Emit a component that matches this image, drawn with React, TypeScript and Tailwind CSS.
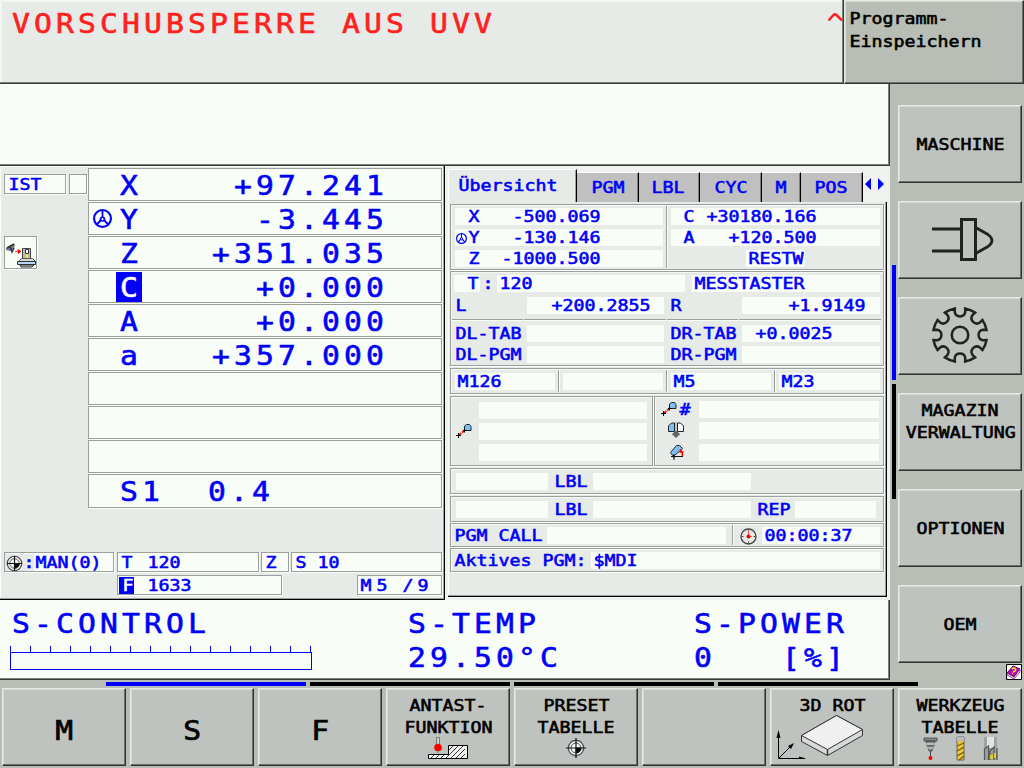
import React from "react";

type Box = { className?: string; children?: React.ReactNode };

/* Small status text on an 11px character grid */
function S({ className = "", children }: Box) {
  return (
    <span
      className={`relative top-px inline-block shrink-0 origin-left translate-x-[0.5px] scale-x-[1.218] whitespace-pre text-[15px] leading-[17px] [-webkit-text-stroke:0.55px_currentColor] ${className}`}
    >
      {children}
    </span>
  );
}

/* Large display text on a 22px character grid */
function L({ className = "", children }: Box) {
  return (
    <span
      className={`relative top-px inline-block shrink-0 origin-left scale-x-[1.1] whitespace-pre text-[27px] leading-[31px] tracking-[3.75px] [-webkit-text-stroke:0.6px_currentColor] ${className}`}
    >
      {children}
    </span>
  );
}

/* White value field */
function F({ className = "", children }: Box) {
  return <div className={`flex h-[17px] shrink-0 bg-[#f8fdf8] ${className}`}>{children}</div>;
}

/* Fixed-width caption */
function C({ className = "", children }: Box) {
  return (
    <div className={`flex h-[17px] shrink-0 ${className}`}>
      <S>{children}</S>
    </div>
  );
}

function Section({ className = "", children }: Box) {
  return (
    <section
      className={`shrink-0 border border-[#9ca09c] shadow-[1px_1px_0_#fbfefb,inset_1px_1px_0_#f4f8f4] ${className}`}
    >
      {children}
    </section>
  );
}

function Divider({ className = "" }: Box) {
  return <div className={`w-[2px] shrink-0 border-l border-[#9ca09c] bg-[#f8fdf8] ${className}`} />;
}

function Frame({ className = "", children }: Box) {
  return (
    <div
      className={`flex h-5 shrink-0 border border-[#9ca09c] bg-[#f8fdf8] pt-px shadow-[1px_1px_0_#fbfefb] ${className}`}
    >
      {children}
    </div>
  );
}

function Key({ className = "", lines, children }: Box & { lines?: string[] }) {
  return (
    <button
      className={`flex h-[78px] w-[124px] shrink-0 flex-col items-center border border-b-[#303430] border-l-[#e4eae2] border-r-[#303430] border-t-[#e4eae2] bg-[#bfc3bf] text-black shadow-[inset_-1px_-1px_0_#6c706c,inset_1px_1px_0_#d6dcd4] ${className}`}
    >
      {lines?.map((t) => (
        <S key={t} className="!origin-center !leading-[22px]">
          {t}
        </S>
      ))}
      {children}
    </button>
  );
}

function Wheel({ className = "" }: Box) {
  return (
    <svg className={className} viewBox="0 0 18 18" fill="none" stroke="#0000f8">
      <circle cx="9" cy="9" r="8" strokeWidth="2" />
      <circle cx="9" cy="9.5" r="1.8" strokeWidth="1.4" />
      <path d="M9 1v7M7.5 11l-4.2 3.5M10.5 11l4.2 3.5" strokeWidth="1.7" />
      <path d="M8 7.5 5 14M10 7.5l3 6.5" strokeWidth="1.2" />
    </svg>
  );
}

function Target({ className = "", long = false }: Box & { long?: boolean }) {
  return (
    <svg className={className} viewBox="0 0 20 20" fill="none" stroke="#111">
      <circle cx="10" cy="10" r="7.6" fill="#f4f6f4" stroke="#444" strokeWidth="1.2" />
      <circle cx="10" cy="10" r="5" stroke="#555" />
      <path d="M10 10h5a5 5 0 0 1-5 5z" fill="#000" />
      <path d={long ? "M10 0v20M0 10h20" : "M10 2v16M2 10h16"} strokeWidth="1.2" />
    </svg>
  );
}

function Shift({ className = "" }: Box) {
  return (
    <svg className={className} viewBox="0 0 16 16" fill="none">
      <path d="M8.500 7.500V3l2-1.500h3l1.500 2v4z" fill="#80c0f0" stroke="#202830" />
      <path d="M3 12 9 7" stroke="#f00" strokeWidth="1.8" strokeDasharray="3 1" />
      <path d="M2.500 10v5M0 12.500h5M8.500 5.500v4M7 7.500h4" stroke="#000" />
    </svg>
  );
}

const axes: [string, string][] = [
  ["X", "+97.241"],
  ["Y", "-3.445"],
  ["Z", "+351.035"],
  ["C", "+0.000"],
  ["A", "+0.000"],
  ["a", "+357.000"],
  ["", ""],
  ["", ""],
  ["", ""],
];

function Positions() {
  return (
    <main className="flex h-[434px] w-[445px] shrink-0 flex-col border-b border-r border-black bg-[#e7ebe7] shadow-[inset_-1px_-1px_0_#9ca09c,inset_1px_1px_0_#fbfefb]">
      <div className="flex h-[342px] pt-[2px]">
        <div className="flex w-[88px] shrink-0 flex-col pl-1 pt-[6px]">
          <div className="flex gap-[3px]">
            <Frame className="w-[62px] pl-[3px]">
              <S>IST</S>
            </Frame>
            <Frame className="w-[18px]" />
          </div>
          <div className="mt-[42px] h-[33px] w-[33px] border border-[#9ca09c] bg-[#f8fdf8] shadow-[1px_1px_0_#fbfefb]">
            <svg className="h-[31px] w-[31px]" viewBox="0 0 31 31" fill="none">
              <path d="m1 11 5-3 4-1-1 5-4 2-4-1z" fill="#777d80" />
              <path d="m2 11 7-4M5 10l2 5 2-4" stroke="#333" strokeWidth="1.5" />
              <path d="M5 11h2v2H5z" fill="#3030a0" />
              <path d="M10 14.500h5M13 12.500v4l3-2z" stroke="#f00" fill="#f00" strokeWidth=".7" />
              <path d="M17.500 11.500h8v11h-8z" fill="#b8bcb8" stroke="#444" />
              <path d="M20.500 12.500h3v4h-3z" fill="#fff" stroke="#333" />
              <path d="M21 17h2v4h-2z" fill="#f0e840" />
              <path d="m16.500 21.500-3 3h17l-3-3z" fill="#d4d8d4" stroke="#555" />
              <path d="M12.500 24.500h18v3h-18z" fill="#b8d8f8" stroke="#333" />
              <path d="M15 28h14l-2 2H16z" fill="#ccc" stroke="#333" />
            </svg>
          </div>
        </div>
        <div className="flex w-[354px] shrink-0 flex-col gap-px">
          {axes.map(([a, v], i) => (
            <div
              key={i}
              className="flex h-[33px] shrink-0 border border-[#9ca09c] bg-[#f8fdf8] shadow-[1px_1px_0_#fbfefb]"
            >
              <div className="flex w-[27px] shrink-0 pl-[4px] pt-[6px]">
                {a === "Y" && <Wheel className="h-[19px] w-[19px]" />}
              </div>
              <div
                className={
                  a === "C"
                    ? "my-px flex h-[30px] w-[26px] shrink-0 bg-[#0000f8] pl-[4px] text-white"
                    : "flex w-[26px] shrink-0 pl-[4px]"
                }
              >
                <L className={a === "C" ? "!top-0 h-[30px]" : ""}>{a}</L>
              </div>
              <div className="flex w-[246px] shrink-0 justify-end">
                <L className="!origin-right">{v}</L>
              </div>
            </div>
          ))}
          <div className="flex h-[34px] shrink-0 border border-[#9ca09c] bg-[#f8fdf8] pl-[31px] shadow-[1px_1px_0_#fbfefb]">
            <L>S1  0.4</L>
          </div>
        </div>
      </div>
      <div className="mt-[44px] flex pl-1">
        <Frame className="w-[110px]">
          <div className="flex h-[17px] w-[29px] shrink-0 bg-[#e7ebe7]">
            <Target className="h-[19px] w-[19px] shrink-0" />
            <S className="-left-px">:</S>
          </div>
          <S className="left-px">MAN(0)</S>
        </Frame>
        <Frame className="ml-[3px] w-[142px] pl-[3px]">
          <C className="w-[26px]">T</C>
          <S>120</S>
        </Frame>
        <Frame className="ml-[2px] w-[28px] pl-[3px]">
          <S>Z</S>
        </Frame>
        <Frame className="ml-[2px] w-[151px] pl-[3px]">
          <S>S 10</S>
        </Frame>
      </div>
      <div className="mt-[3px] flex pl-[117px]">
        <Frame className="w-[165px] pl-px">
          <div className="flex h-[17px] w-[15px] shrink-0 bg-[#0000f8] pl-[3px] text-white">
            <S>F</S>
          </div>
          <S className="ml-[13px]">1633</S>
        </Frame>
        <Frame className="ml-[75px] w-[85px] pl-[2px]">
          <C className="w-[16px]">M</C>
          <C className="w-[26px]">5</C>
          <C className="w-[15px]">/</C>
          <S>9</S>
        </Frame>
      </div>
    </main>
  );
}

const tabs: [string, string][] = [
  ["PGM", "w-[62px] pl-[14px]"],
  ["LBL", "w-[61px] pl-[12px]"],
  ["CYC", "w-[62px] pl-[14px]"],
  ["M", "w-[39px] pl-[13px]"],
  ["POS", "w-[62px] pl-[13px]"],
];

function Overview() {
  return (
    <aside className="flex h-[434px] w-[445px] shrink-0 flex-col bg-[#eff2ee] pl-[3px]">
      <nav className="flex h-[36px] shrink-0 items-end pt-[3px]">
        <div className="flex h-[33px] w-[129px] shrink-0 border-l border-t border-r border-l-white border-r-black border-t-white bg-[#e7ebe7] pl-[9px] pt-[7px] shadow-[inset_-1px_0_0_#9ca09c]">
          <S>Übersicht</S>
        </div>
        {tabs.map(([t, w]) => (
          <div
            key={t}
            className={`flex h-[30px] shrink-0 self-end border-r border-t border-r-black border-t-white bg-[#c0c0c0] pt-[6px] shadow-[inset_-1px_0_0_#808080] ${w}`}
          >
            <S>{t}</S>
          </div>
        ))}
        <svg className="mb-[12px] ml-[2px] h-[12px] w-[20px] shrink-0" viewBox="0 0 20 12" fill="#0000f8">
          <path d="M6 0v12L0 6zM13 0v12l6-6z" />
        </svg>
      </nav>
      <div className="flex h-[395px] w-[439px] shrink-0 flex-col border-b border-r border-black bg-[#e7ebe7] pl-[2px] pt-[2px] shadow-[inset_-1px_-1px_0_#9ca09c,inset_1px_0_0_#fbfefb]">
        <Section className="flex h-[66px] w-[434px]">
          <div className="flex w-[215px] shrink-0 flex-col gap-1 pl-1 pt-[3px]">
            <F className="w-[208px]">
              <C className="ml-[13px] w-[44px]">X</C>
              <S>-500.069</S>
            </F>
            <F className="w-[208px]">
              <div className="w-[13px] shrink-0 pl-px pt-[4px]">
                <Wheel className="h-[11px] w-[11px]" />
              </div>
              <C className="w-[44px]">Y</C>
              <S>-130.146</S>
            </F>
            <F className="w-[208px]">
              <C className="ml-[13px] w-[33px]">Z</C>
              <S>-1000.500</S>
            </F>
          </div>
          <Divider className="mt-px h-[62px]" />
          <div className="flex flex-col gap-1 pl-[3px] pt-[3px]">
            <F className="w-[209px]">
              <C className="ml-[12px] w-[23px]">C</C>
              <S>+30180.166</S>
            </F>
            <F className="w-[209px]">
              <C className="ml-[12px] w-[45px]">A</C>
              <S>+120.500</S>
            </F>
            <F className="ml-[75px] w-[59px] pl-[2px]">
              <S>RESTW</S>
            </F>
          </div>
        </Section>

        <Section className="mt-px flex h-[95px] w-[434px] flex-col pt-[3px]">
          <div className="flex pl-[3px]">
            <F className="w-[26px] pl-[13px]">
              <S>T</S>
            </F>
            <C className="ml-[2px] w-[15px]">:</C>
            <F className="w-[188px] pl-[2px]">
              <S>120</S>
            </F>
            <F className="ml-[7px] w-[188px] pl-[2px]">
              <S>MESSTASTER</S>
            </F>
          </div>
          <div className="mt-[5px] flex pl-[4px]">
            <C className="w-[72px]">L</C>
            <F className="w-[137px] pl-[24px]">
              <S>+200.2855</S>
            </F>
            <C className="ml-[6px] w-[72px]">R</C>
            <F className="w-[138px] pl-[46px]">
              <S>+1.9149</S>
            </F>
          </div>
          <div className="mt-[5px] flex gap-px pl-px">
            {[0, 1, 2, 3].map((n) => (
              <div
                key={n}
                className={`h-[2px] shrink-0 border-t border-[#9ca09c] bg-[#f8fdf8] ${n % 2 ? "w-[142px]" : "w-[71px]"}`}
              />
            ))}
          </div>
          <div className="mt-[4px] flex pl-[4px]">
            <C className="w-[72px]">DL-TAB</C>
            <F className="w-[137px]" />
            <C className="ml-[6px] w-[72px]">DR-TAB</C>
            <F className="w-[138px] pl-[13px]">
              <S>+0.0025</S>
            </F>
          </div>
          <div className="mt-1 flex pl-[4px]">
            <C className="w-[72px]">DL-PGM</C>
            <F className="w-[137px]" />
            <C className="ml-[6px] w-[72px]">DR-PGM</C>
            <F className="w-[138px]" />
          </div>
        </Section>

        <Section className="mt-[2px] flex h-[26px] w-[434px] pl-[4px] pt-px">
          <F className="mt-[3px] w-[100px] pl-[2px]">
            <S>M126</S>
          </F>
          <Divider className="ml-[3px] h-[22px]" />
          <F className="ml-[3px] mt-[3px] w-[100px]" />
          <Divider className="ml-[3px] h-[22px]" />
          <F className="ml-[3px] mt-[3px] w-[100px] pl-[2px]">
            <S>M5</S>
          </F>
          <Divider className="ml-[3px] h-[22px]" />
          <F className="ml-[3px] mt-[3px] w-[101px] pl-[2px]">
            <S>M23</S>
          </F>
        </Section>

        <div className="mt-[2px] flex shrink-0 gap-px">
          <Section className="flex h-[70px] w-[203px]">
            <Shift className="ml-[5px] mt-[26px] h-4 w-4 shrink-0" />
            <div className="ml-[7px] flex flex-col gap-1 pt-[5px]">
              <F className="w-[168px]" />
              <F className="w-[168px]" />
              <F className="w-[168px]" />
            </div>
          </Section>
          <Section className="flex h-[70px] w-[230px]">
            <div className="flex w-[44px] shrink-0 flex-col pl-[6px] pt-[4px]">
              <div className="flex">
                <Shift className="h-4 w-4 shrink-0" />
                <S className="left-[2px]">#</S>
              </div>
              <svg className="ml-[6px] mt-[4px] h-4 w-[18px]" viewBox="0 0 18 16" fill="none" stroke="#202428">
                <path d="M1.500 9.500V4l3-3h3v8.500z" fill="#80c0f0" />
                <path d="M10.500 9.500V1h3l3 3v5.500z" fill="#f8fdf8" />
                <path d="M9 0v12" stroke="#999" />
                <path d="M5.500 12 9 9.500l3.500 2.500L9 15.500z" fill="#666" stroke="#555" />
              </svg>
              <svg className="ml-[8px] mt-[6px] h-4 w-4" viewBox="0 0 16 16" fill="none">
                <path d="m1.500 8.500 6-7h3l3 3-8 7h-2z" fill="#80c0f0" stroke="#202428" />
                <path d="M5 10v6M2 12.500h12" stroke="#111" />
                <path d="m3 12 2 2 2-2z" fill="#111" />
                <path d="M11 6c2 1 2.500 3 2.500 6M10.500 8h4" stroke="#f00" strokeWidth="1.600" />
              </svg>
            </div>
            <div className="flex flex-col gap-1 pt-[4px]">
              <F className="w-[180px]" />
              <F className="w-[180px]" />
              <F className="mt-px w-[180px]" />
            </div>
          </Section>
        </div>

        <Section className="mt-[2px] flex h-[26px] w-[434px] pl-[5px] pt-[4px]">
          <F className="w-[92px]" />
          <C className="ml-[6px] w-[39px]">LBL</C>
          <F className="w-[158px]" />
        </Section>
        <Section className="mt-[2px] flex h-[26px] w-[434px] pl-[5px] pt-[4px]">
          <F className="w-[92px]" />
          <C className="ml-[6px] w-[39px]">LBL</C>
          <F className="w-[158px]" />
          <C className="ml-[6px] w-[38px]">REP</C>
          <F className="w-[81px]" />
        </Section>
        <Section className="mt-px flex h-[24px] w-[434px] pl-[3px] pt-px">
          <C className="mt-[2px] w-[93px]">PGM CALL</C>
          <F className="mt-[2px] w-[179px]" />
          <Divider className="ml-[6px] h-[20px]" />
          <svg className="ml-[6px] mt-[3px] h-[17px] w-[17px] shrink-0" viewBox="0 0 17 17" fill="none">
            <circle cx="8.500" cy="8.500" r="7.500" fill="#e8e8e4" stroke="#444" strokeWidth="1.300" />
            <path d="M8.500 2v1.500M8.500 13.500V15M2 8.500h1.500M13.500 8.500H15" stroke="#444" />
            <path d="M8.500 2.500v6h3.500" stroke="#f66" strokeWidth="1.200" />
            <circle cx="8.500" cy="8.500" r="2" fill="#f00" />
          </svg>
          <F className="ml-[5px] mt-[2px] w-[118px] pl-[2px]">
            <S>00:00:37</S>
          </F>
        </Section>
        <Section className="mt-px flex h-[24px] w-[434px] pl-[3px] pt-[3px]">
          <C className="w-[137px]">Aktives PGM:</C>
          <F className="w-[289px] pl-[2px]">
            <S>$MDI</S>
          </F>
        </Section>
      </div>
    </aside>
  );
}

function Status() {
  return (
    <footer className="flex h-[80px] w-[890px] shrink-0 border-b border-r border-[#383c38] bg-[#f8fdf8] pl-[10px] pt-[7px] shadow-[inset_-1px_-1px_0_#7c807c]">
      <div className="flex w-[398px] shrink-0 flex-col">
        <L className="left-[2px] self-start">S-CONTROL</L>
        <svg className="mt-[8px] h-[24px] w-[302px]" viewBox="0 0 302 24" fill="none" stroke="#0000f8" shapeRendering="crispEdges">
          <path d="M.5 6.500h301v17H.5z" />
          {Array.from({ length: 16 }, (_, i) => (
            <path key={i} d={`M${i * 20 + 0.5} 0v6`} />
          ))}
        </svg>
      </div>
      <div className="flex w-[286px] shrink-0 flex-col items-start gap-[3px]">
        <L>S-TEMP</L>
        <L>29.50°C</L>
      </div>
      <div className="flex flex-col items-start gap-[3px]">
        <L>S-POWER</L>
        <L>0   [%]</L>
      </div>
    </footer>
  );
}

function Gear() {
  const teeth = Array.from({ length: 8 }, (_, i) => {
    const p = (r: number, deg: number) => {
      const t = ((deg + i * 45) * Math.PI) / 180;
      return `${(29 + r * Math.cos(t)).toFixed(2)} ${(29 + r * Math.sin(t)).toFixed(2)}`;
    };
    return `${i ? "L" : "M"}${p(27, -34)}A27 27 0 0 1 ${p(27, -11)}L${p(23.5, -13)}A5.4 5.4 0 0 0 ${p(23.5, 13)}L${p(27, 11)}`;
  }).join("");
  return (
    <svg className="mt-[8px] h-[58px] w-[58px]" viewBox="0 0 58 58" fill="none" stroke="#202420" strokeWidth="2.5">
      <path d={`${teeth}Z`} strokeLinejoin="miter" />
      <circle cx="29" cy="29" r="8.3" />
    </svg>
  );
}

function SideKeys() {
  return (
    <div className="flex h-[596px] w-[134px] shrink-0 pl-[2px]">
      <div className="w-1 shrink-0 pt-[181px]">
        <div className="h-[115px] bg-[#0000f8]" />
        <div className="mt-1 h-[115px] bg-black" />
      </div>
      <div className="ml-[2px] flex w-[126px] shrink-0 flex-col gap-[18px] pt-[21px]">
        <Key className="justify-center" lines={["MASCHINE"]} />
        <Key>
          <svg className="ml-[6px] mt-[14px] h-[48px] w-[64px]" viewBox="0 0 64 48" fill="none" stroke="#202420" strokeWidth="3">
            <path d="M1 13h28M1 35h28" />
            <path d="M30.500 3.500h14v40h-14z" />
            <path d="M45.500 12 57 18.500q8 6 0 12L45.500 37" strokeWidth="2.800" />
          </svg>
        </Key>
        <Key>
          <Gear />
        </Key>
        <Key className="pt-[5px]" lines={["MAGAZIN", "VERWALTUNG"]} />
        <Key className="justify-center" lines={["OPTIONEN"]} />
        <div className="flex flex-col">
          <Key className="justify-center" lines={["OEM"]} />
          <svg className="ml-[108px] mt-px h-4 w-4" viewBox="0 0 16 16">
            <path d="M.5.5h15v15H.5z" fill="#fff" stroke="#000" />
            <path d="m1 9 6-7 7 3-6 8z" fill="#c000c0" stroke="#600060" />
            <path d="m1 9 7 4 6-8v3l-6 7-7-4z" fill="#ddd" stroke="#800080" strokeWidth=".7" />
            <path d="M6 5c2-2 5 0 3 2l-2 1M6 9.500h1" fill="none" stroke="#ff0" strokeWidth="1.500" />
          </svg>
        </div>
      </div>
    </div>
  );
}

function SoftKeys() {
  return (
    <div className="flex h-[88px] shrink-0 flex-col pt-[2px]">
      <div className="flex h-1 shrink-0 gap-1 pl-[106px]">
        <div className="w-[200px] bg-[#0000f8]" />
        <div className="w-[200px] bg-black" />
        <div className="w-[200px] bg-black" />
        <div className="w-[200px] bg-black" />
      </div>
      <div className="mt-[2px] flex gap-1 pl-[2px]">
        {["M", "S", "F"].map((t) => (
          <Key key={t} className="justify-center pt-[4px]">
            <L className="!origin-center !tracking-normal [-webkit-text-stroke:0.7px_currentColor]">{t}</L>
          </Key>
        ))}
        <Key className="pt-[5px]" lines={["ANTAST-", "FUNKTION"]}>
          <svg className="-mt-[2px] h-[23px] w-[42px]" viewBox="0 0 42 23" fill="none">
            <path d="M9.500 1.500h3v7h-3z" fill="#d0d4d0" stroke="#777" />
            <circle cx="11" cy="11.500" r="3.800" fill="#f00" />
            <path d="M11 15v2" stroke="#777" />
            <path d="M1.500 18.500h20v-9h19v13h-39z" fill="#f0f2f0" stroke="#000" />
            <path d="m4 22 3-3m2 3 3-3m2 3 3-3m2 3 12-12m-7 12 12-12m-7 12 9-9m-4 9 4-4M22 14l4-4" stroke="#222" strokeWidth=".9" />
          </svg>
        </Key>
        <Key className="pt-[5px]" lines={["PRESET", "TABELLE"]}>
          <Target long className="h-[20px] w-[20px]" />
        </Key>
        <Key />
        <Key className="pt-[5px]" lines={["3D ROT"]}>
          <svg className="-mt-[5px] h-[48px] w-[116px]" viewBox="0 0 116 48" fill="none">
            <path d="m27.500 24.500 35-20 26 14v6l-35 20-26-14z" fill="#d8dad8" stroke="#333" />
            <path d="m27.500 24.500 35-20 26 14-35 20z" fill="#f0f0f0" stroke="#333" />
            <path d="M53.500 38.500v6" stroke="#333" strokeWidth="1.500" />
            <path d="M4.500 24v23.500H27M5 47l13-13" stroke="#000" />
            <path d="m4.500 19 2 8h-4zM32 47.500l-7-2v4zM20 32l-3 6-3-3z" fill="#000" />
          </svg>
        </Key>
        <Key className="pt-[5px]" lines={["WERKZEUG", "TABELLE"]}>
          <svg className="-mt-[2px] h-[25px] w-[80px]" viewBox="0 0 80 25" fill="none">
            <path d="M4 2h13v3H4zM6 5h9l-1 5H7zM8 11h5l-1 4H9z" fill="#888" stroke="#444" strokeWidth=".8" />
            <path d="M6 8h9M8 12h5" stroke="#eee" />
            <path d="M10.500 15v6" stroke="#444" />
            <circle cx="10.500" cy="22" r="2" fill="#f00" />
            <path d="M37 1h7v23h-7z" fill="#e8c840" stroke="#666" />
            <path d="M37 1h7v4h-7z" fill="#bbb" />
            <path d="m37 10 7-3M37 15l7-4M37 20l7-4M39 24l5-4" stroke="#765800" strokeWidth="1.300" />
            <path d="M64 1h13v23H64z" fill="#a0a4a0" />
            <path d="M67 1h7v11h-7z" fill="#e4e4e4" />
            <path d="M64.500 24V13l4-3v14M70 24v-9l4-4v13M77 12v12" stroke="#555" strokeWidth="1.300" />
            <path d="M70 19h3v4h-3zM74 17h2v5h-2z" fill="#e0cc30" />
          </svg>
        </Key>
      </div>
    </div>
  );
}

export default function App() {
  return (
    <div className="flex h-[768px] w-[1024px] flex-col overflow-hidden bg-[#b8beb5] font-['DejaVu_Sans_Mono',monospace] text-[#0000f8]">
      <header className="flex h-[84px] shrink-0">
        <div className="flex w-[844px] shrink-0 justify-between border-b border-r border-[#383c38] bg-[#e7ebe7] pl-[12px] pt-[7px] text-[#ff2020] shadow-[inset_-1px_-1px_0_#7c807c,inset_2px_2px_0_#f3f7f3]">
          <L>VORSCHUBSPERRE AUS UVV</L>
          <svg className="mt-[6px] h-[8px] w-[15px]" viewBox="0 0 15 8" fill="none" stroke="#ff2020" strokeWidth="2.500">
            <path d="M.5 7.500 6 1.500h2l6 6" />
          </svg>
        </div>
        <div className="flex w-[180px] shrink-0 flex-col items-start gap-[6px] border border-b-[#303430] border-l-[#e4eae2] border-r-[#303430] border-t-[#e4eae2] bg-[#b8beb5] pl-[4px] pt-[9px] text-black shadow-[inset_-1px_-1px_0_#6c706c,inset_1px_1px_0_#d6dcd4]">
          <S>Programm-</S>
          <S>Einspeichern</S>
        </div>
      </header>
      <div className="flex h-[596px] shrink-0">
        <div className="flex w-[890px] shrink-0 flex-col">
          <div className="h-[82px] shrink-0 border-b border-r border-[#383c38] bg-[#f8fdf8] shadow-[inset_-1px_-1px_0_#7c807c]" />
          <div className="flex h-[434px] shrink-0">
            <Positions />
            <Overview />
          </div>
          <Status />
        </div>
        <SideKeys />
      </div>
      <SoftKeys />
    </div>
  );
}
